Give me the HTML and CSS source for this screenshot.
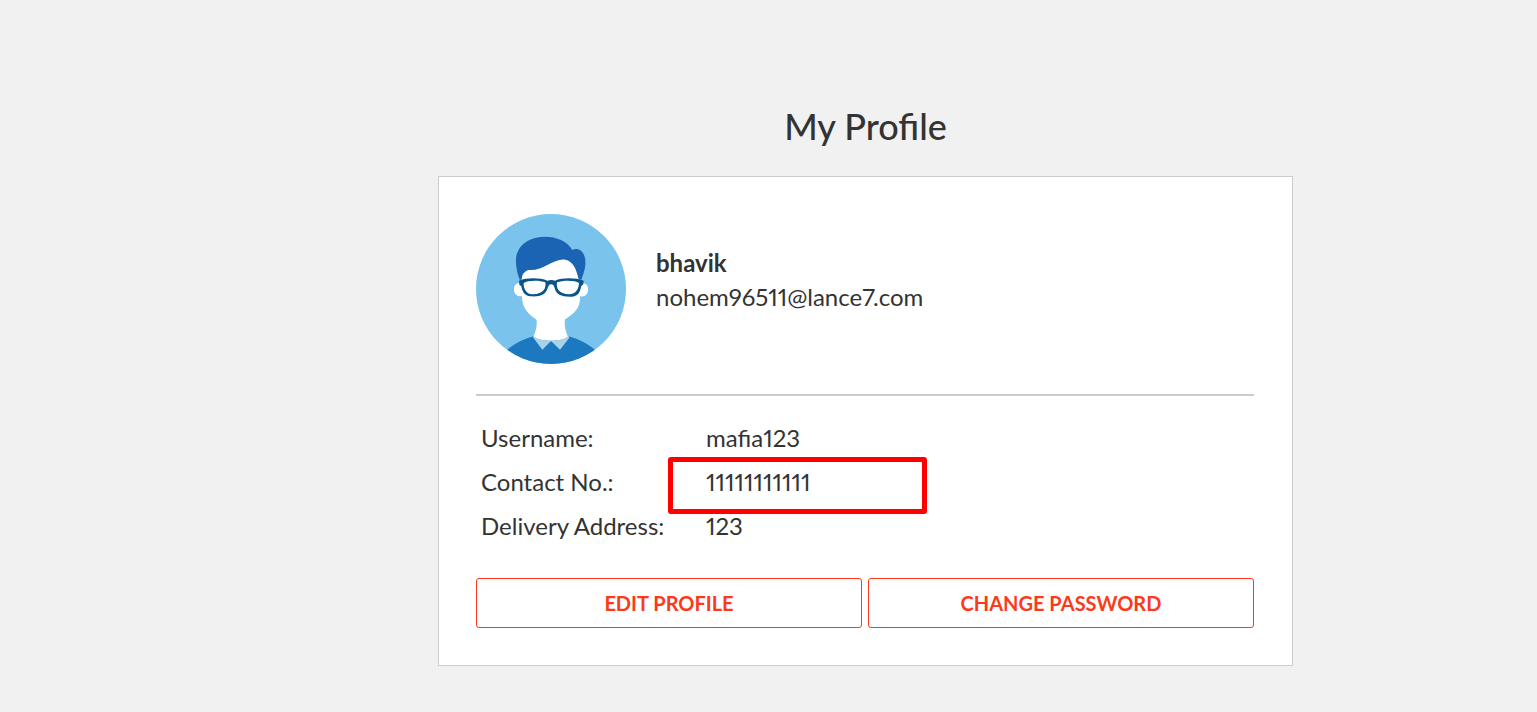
FILE: index.html
```html
<!DOCTYPE html>
<html lang="en">
<head>
<meta charset="utf-8">
<meta name="viewport" content="width=device-width, initial-scale=1">
<title>My Profile</title>
<link rel="stylesheet" href="styles.css">
</head>
<body class="page">
<main class="profile">
  <h1 class="profile-title">My Profile</h1>
  <section class="card">
    <header class="identity">
      <svg class="avatar" viewBox="18 18 450 450" role="img" aria-label="Profile picture">
        <defs><clipPath id="disc"><circle cx="243" cy="243" r="225"/></clipPath></defs>
        <g clip-path="url(#disc)">
          <rect x="18" y="18" width="450" height="450" fill="#7ac3ec"/>
          <path d="M104 432C130 408 158 394 190 385L243 397L296 385C328 394 356 408 382 432V470H104Z" fill="#1c79c0"/>
          <path d="M196 320H288C281 341 284 364 294 386C278 402 210 402 190 386C200 364 204 343 196 320Z" fill="#fff"/>
          <path d="M190 384C208 403 278 403 296 384L298 389L270 425L243 399L217 425L190 389Z" fill="#a9d1e9"/>
          <path d="M154 225C152 200 158 186 175 180C215 183 243 140 283 150C316 160 328 190 332 225C352 222 359 240 352 255C348 264 339 267 330 265C332 303 309 320 283 335C267 350 220 350 200 335C174 320 155 297 156 265C143 266 133 260 132 246C131 231 142 222 154 225Z" fill="#fff"/>
          <path d="M149 215C138 190 134 151 142 134C163 72 277 71 307 126C323 118 341 128 345 151C350 174 340 198 334 215L326 214C319 181 308 160 286 155C252 149 221 190 175 186C160 192 156 201 155 215Z" fill="#1b64b3"/>
          <path d="M147 218C172 208 211 209 232 218Q244 214 255 218C276 209 315 208 341 218L340 229L334 234C330 254 323 265 305 266C275 267 258 260 254 240L250 231Q244 227 237 231L233 240C228 260 211 267 181 265C164 264 157 251 154 235L148 230Z" fill="#07558b"/>
          <path d="M161 225C172 216 210 216 226 223C229 239 222 259 188 259C169 260 160 241 161 225ZM261 223C278 216 316 216 327 225C327 241 317 259 298 259C265 259 258 239 261 223Z" fill="#fff"/>
        </g>
      </svg>
      <div class="identity-text">
        <strong class="name">bhavik</strong>
        <span>nohem96511@lance7.com</span>
      </div>
    </header>
    <dl class="details">
      <dt>Username:</dt>
      <dd>mafia123</dd>
      <dt>Contact No.:</dt>
      <dd class="highlighted">11111111111</dd>
      <dt>Delivery Address:</dt>
      <dd>123</dd>
    </dl>
    <div class="actions">
      <button class="action" type="button">EDIT PROFILE</button>
      <button class="action" type="button">CHANGE PASSWORD</button>
    </div>
  </section>
</main>
</body>
</html>
```
FILE: styles.css
```css
*,
*::after {
  box-sizing: border-box;
}

.page {
  margin: 0;
  padding: 102px 0 46px 194px;
  background: #f1f1f1;
  color: #333;
  font: 24px/34px Lato, "Open Sans", sans-serif;
  font-variant-numeric: proportional-nums;
}

.profile {
  max-width: 855px;
  margin: 0 auto;
}

.profile-title {
  margin: 0 0 26px;
  font-size: 36px;
  font-weight: 500;
  line-height: 48px;
  text-align: center;
}

.card {
  padding: 37px 38px 37px 37px;
  border: 1px solid #ccc;
  background: #fff;
}

.identity {
  display: flex;
  align-items: center;
  gap: 30px;
  padding-bottom: 30px;
  border-bottom: 2px solid #ccc;
}

.avatar {
  flex: none;
  width: 150px;
  height: 150px;
}

.identity-text {
  display: flex;
  flex-direction: column;
  min-width: 0;
  padding-bottom: 18px;
}

.name {
  font-weight: 700;
}

.details {
  display: grid;
  grid-template-columns: 225px 1fr;
  margin: 20px 0 30px;
  padding-left: 5px;
  line-height: 44px;
}

.details dd {
  margin: 0;
}

.highlighted {
  position: relative;
}

.highlighted::after {
  content: "";
  position: absolute;
  top: -3px;
  left: -38px;
  width: 259px;
  height: 57px;
  border: 5px solid #f00;
  border-radius: 3px;
}

.actions {
  display: flex;
  gap: 6px;
}

.action {
  flex: 1;
  height: 50px;
  padding: 0 12px;
  border: 1px solid #fc3a1b;
  border-radius: 3px;
  background: #fff;
  color: #fc3a1b;
  font: 700 20px/24px Lato, sans-serif;
  cursor: pointer;
}
```
